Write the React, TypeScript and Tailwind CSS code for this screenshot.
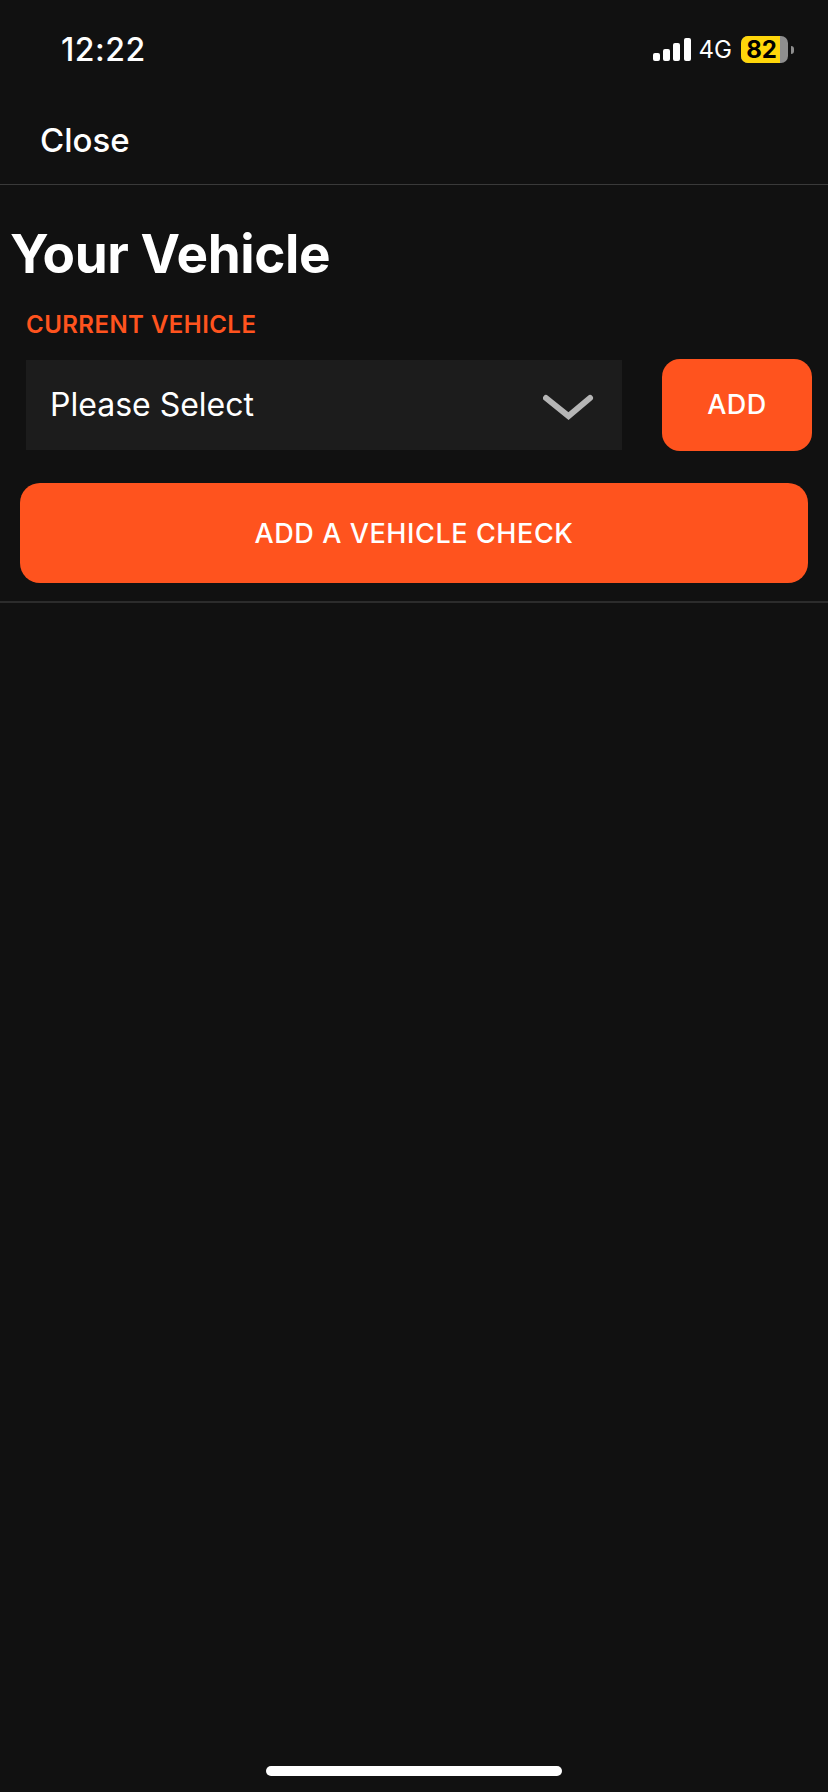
const ORANGE = 'bg-[#ff531e]';

function StatusBar() {
  return (
    <div className="flex h-[99px] items-center justify-between pl-[61px] pr-[34px] text-white">
      <span className="text-[32px] leading-none font-medium tracking-[0.5px]">12:22</span>
      <div className="flex items-center">
        <svg width="38" height="23" viewBox="0 0 38 23" fill="#fff">
          <rect x="0" y="15" width="7" height="8" rx="2" />
          <rect x="10" y="11" width="7" height="12" rx="2" />
          <rect x="20" y="5" width="7" height="18" rx="2" />
          <rect x="31" y="0" width="7" height="23" rx="2" />
        </svg>
        <span className="ml-[8px] text-[24px] leading-none">4G</span>
        <div className="ml-[9px] flex h-[27px] w-[47px] overflow-hidden rounded-[7px] bg-[#8e8e8e]">
          <div className="flex w-[39px] items-center justify-center bg-[#ffd60a] pl-[2px] text-[24px] leading-none font-bold text-black">
            82
          </div>
        </div>
        <div className="ml-[3px] h-[8px] w-[3px] rounded-r-full bg-[#8e8e8e]" />
      </div>
    </div>
  );
}

export default function App() {
  return (
    <div className="flex h-[1792px] flex-col bg-[#111111] font-['Inter',sans-serif] text-white">
      <StatusBar />
      <div className="flex h-[86px] items-center border-b border-[#3a3a3a] pb-[2px] pl-[40px]">
        <span className="text-[33px] leading-none font-medium">Close</span>
      </div>

      <h1 className="mt-[35px] pl-[10px] text-[53px] leading-[68px] font-bold tracking-[-0.4px]">Your Vehicle</h1>
      <div className="mt-[22px] pl-[26px] text-[24px] leading-[30px] font-semibold tracking-[0.45px] text-[#ff531e]">CURRENT VEHICLE</div>

      <div className="mt-[19px] flex items-stretch pl-[26px]">
        <div className="my-[1px] flex h-[90px] w-[596px] items-center justify-between bg-[#1c1c1c] pl-[24px] pr-[27px]">
          <span className="text-[32px] leading-none">Please Select</span>
          <svg className="mt-[6px]" width="52" height="28" viewBox="0 0 52 28" fill="none" stroke="#b5b5b5" strokeWidth="6" strokeLinecap="round" strokeLinejoin="miter">
            <path d="M3 4 L25.5 22 L47 4" />
          </svg>
        </div>
        <button className={`ml-[40px] h-[92px] w-[150px] rounded-[18px] ${ORANGE} text-[27px] font-medium tracking-[0.4px] text-white`}>ADD</button>
      </div>

      <button className={`mx-[20px] mt-[32px] h-[100px] w-[788px] rounded-[20px] ${ORANGE} pt-[2px] text-[27px] font-medium tracking-[0.6px] text-white`}>
        ADD A VEHICLE CHECK
      </button>
      <div className="mt-[18px] h-[2px] bg-[#2c2c2c]" />

      <div className="mt-auto mb-[16px] h-[10px] w-[296px] self-center rounded-full bg-white" />
    </div>
  );
}
